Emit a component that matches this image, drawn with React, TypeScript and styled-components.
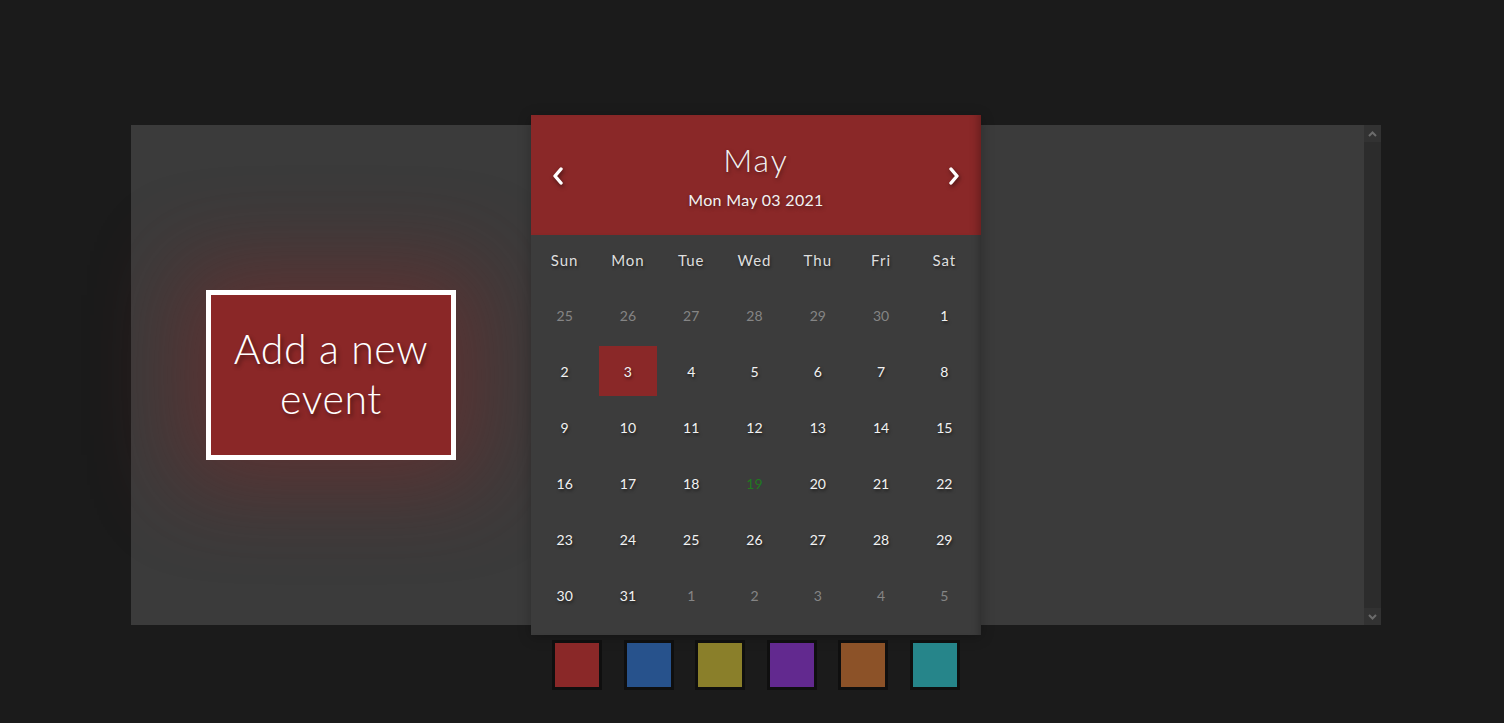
import styled, { createGlobalStyle } from 'styled-components';

const GlobalStyle = createGlobalStyle`
  html, body {
    margin: 0;
    padding: 0;
    background-color: #1b1b1b;
    font-family: Lato, "Open Sans", sans-serif;
  }
`;

const Page = styled.div`
  padding: 125px 0 0 131px;
  height: 598px;
`;

const Panel = styled.div`
  width: 1250px;
  height: 500px;
  background-color: #3b3b3b;
  display: flex;
`;

const LeftPane = styled.div`
  width: 400px;
  display: flex;
  align-items: center;
  justify-content: center;
`;

const AddButton = styled.button`
  width: 250px;
  height: 170px;
  box-sizing: border-box;
  border: 5px solid #ffffff;
  background-color: #8a2727;
  color: #ffffff;
  font-family: Lato, "Open Sans", sans-serif;
  font-weight: 300;
  font-size: 41px;
  letter-spacing: 0.6px;
  line-height: 50px;
  padding: 0 10px 2px;
  text-shadow: 2px 3px 4px rgba(0, 0, 0, 0.45);
  box-shadow: 0 0 90px 25px rgba(138, 39, 39, 0.45);
  cursor: pointer;
`;

const CalendarColumn = styled.div`
  width: 450px;
  flex-shrink: 0;
  align-self: flex-start;
  margin-top: -10px;
  display: flex;
  flex-direction: column;
  position: relative;
  z-index: 1;
`;

const Calendar = styled.div`
  height: 520px;
  flex-shrink: 0;
  background-color: #3c3c3c;
  box-shadow: inset -8px 0 10px -8px rgba(0, 0, 0, 0.35), 0 2px 12px rgba(0, 0, 0, 0.25);
  display: flex;
  flex-direction: column;
`;

const Header = styled.div`
  height: 120px;
  flex-shrink: 0;
  background-color: #8a2828;
  box-shadow: inset -10px 0 10px -8px rgba(0, 0, 0, 0.3);
  display: grid;
  grid-template-columns: 54px 1fr 54px;
  align-items: center;
  color: #f2f2f2;
`;

const NavArrow = styled.button`
  background: none;
  border: none;
  padding: 2px 0 0;
  display: flex;
  justify-content: center;
  filter: drop-shadow(1px 2px 2px rgba(0, 0, 0, 0.5));
  cursor: pointer;
`;

const Title = styled.div`
  display: flex;
  flex-direction: column;
  align-items: center;
  text-shadow: 1px 2px 4px rgba(0, 0, 0, 0.4);
`;

const Month = styled.div`
  font-size: 32px;
  font-weight: 300;
  letter-spacing: 2px;
  line-height: 40px;
`;

const FullDate = styled.div`
  font-size: 16px;
  letter-spacing: 0.3px;
  margin-top: 10px;
  line-height: 20px;
`;

const Grid = styled.div`
  display: grid;
  grid-template-columns: repeat(7, 1fr);
  padding: 0 5px 0 2px;
`;

const WeekDays = styled(Grid)`
  height: 50px;
  flex-shrink: 0;
  align-items: center;
  margin-bottom: 5px;
`;

const WeekDay = styled.div`
  text-align: center;
  font-size: 15px;
  letter-spacing: 1px;
  color: #dedede;
  text-shadow: 1px 2px 3px rgba(0, 0, 0, 0.45);
`;

const Days = styled(Grid)`
  row-gap: 6px;
  grid-auto-rows: 50px;
`;

const Day = styled.div<{ $muted?: boolean; $selected?: boolean; $today?: boolean }>`
  margin: 0 3px;
  display: flex;
  align-items: center;
  justify-content: center;
  font-size: 14px;
  background-color: ${p => (p.$selected ? '#8a2828' : 'transparent')};
  color: ${p => (p.$muted ? '#858585' : p.$today ? '#1f7a1f' : '#f2f2f2')};
  text-shadow: ${p => (p.$muted || p.$today ? 'none' : '1px 2px 3px rgba(0, 0, 0, 0.5)')};
  cursor: pointer;
`;

const Swatches = styled.div`
  margin-top: 5px;
  display: flex;
  justify-content: space-evenly;
`;

const Swatch = styled.div<{ $color: string }>`
  width: 50px;
  height: 50px;
  box-sizing: border-box;
  border: 3px solid #0f0f0f;
  background-color: ${p => p.$color};
  cursor: pointer;
`;

const RightPane = styled.div`
  flex: 1;
`;

const Scrollbar = styled.div`
  width: 17px;
  background-color: #2c2c2c;
  display: flex;
  flex-direction: column;
  justify-content: space-between;
`;

const ScrollButton = styled.div`
  height: 17px;
  background-color: #323232;
  display: flex;
  align-items: center;
  justify-content: center;
`;

const weekDays = ['Sun', 'Mon', 'Tue', 'Wed', 'Thu', 'Fri', 'Sat'];

type Cell = { n: number; muted?: boolean };

const cells: Cell[] = [
  ...[25, 26, 27, 28, 29, 30].map(n => ({ n, muted: true })),
  ...Array.from({ length: 31 }, (_, i) => ({ n: i + 1 })),
  ...[1, 2, 3, 4, 5].map(n => ({ n, muted: true })),
];

const colors = ['#8a2828', '#27528c', '#8a7f2a', '#62298f', '#8c5228', '#26858a'];

const Chevron = ({ dir }: { dir: 'left' | 'right' }) => (
  <svg width="14" height="18" viewBox="0 0 14 18">
    <path
      d={dir === 'left' ? 'M10 2 L4 9 L10 16' : 'M4 2 L10 9 L4 16'}
      fill="none"
      stroke="#ffffff"
      strokeWidth="3.4"
      strokeLinecap="round"
      strokeLinejoin="round"
    />
  </svg>
);

const SmallArrow = ({ up }: { up?: boolean }) => (
  <svg width="9" height="6" viewBox="0 0 9 6">
    <path d={up ? 'M1 5 L4.5 1.5 L8 5' : 'M1 1 L4.5 4.5 L8 1'} fill="none" stroke="#6b6b6b" strokeWidth="2" />
  </svg>
);

const App = () => {
  return (
    <Page>
      <GlobalStyle />
      <Panel>
        <LeftPane>
          <AddButton>Add a new event</AddButton>
        </LeftPane>

        <CalendarColumn>
          <Calendar>
            <Header>
              <NavArrow>
                <Chevron dir="left" />
              </NavArrow>
              <Title>
                <Month>May</Month>
                <FullDate>Mon May 03 2021</FullDate>
              </Title>
              <NavArrow>
                <Chevron dir="right" />
              </NavArrow>
            </Header>

            <WeekDays>
              {weekDays.map(d => (
                <WeekDay key={d}>{d}</WeekDay>
              ))}
            </WeekDays>

            <Days>
              {cells.map((c, i) => (
                <Day
                  key={i}
                  $muted={c.muted}
                  $selected={!c.muted && c.n === 3}
                  $today={!c.muted && c.n === 19}
                >
                  {c.n}
                </Day>
              ))}
            </Days>
          </Calendar>

          <Swatches>
            {colors.map(c => (
              <Swatch key={c} $color={c} />
            ))}
          </Swatches>
        </CalendarColumn>

        <RightPane />
        <Scrollbar>
          <ScrollButton>
            <SmallArrow up />
          </ScrollButton>
          <ScrollButton>
            <SmallArrow />
          </ScrollButton>
        </Scrollbar>
      </Panel>
    </Page>
  );
};

export default App;
